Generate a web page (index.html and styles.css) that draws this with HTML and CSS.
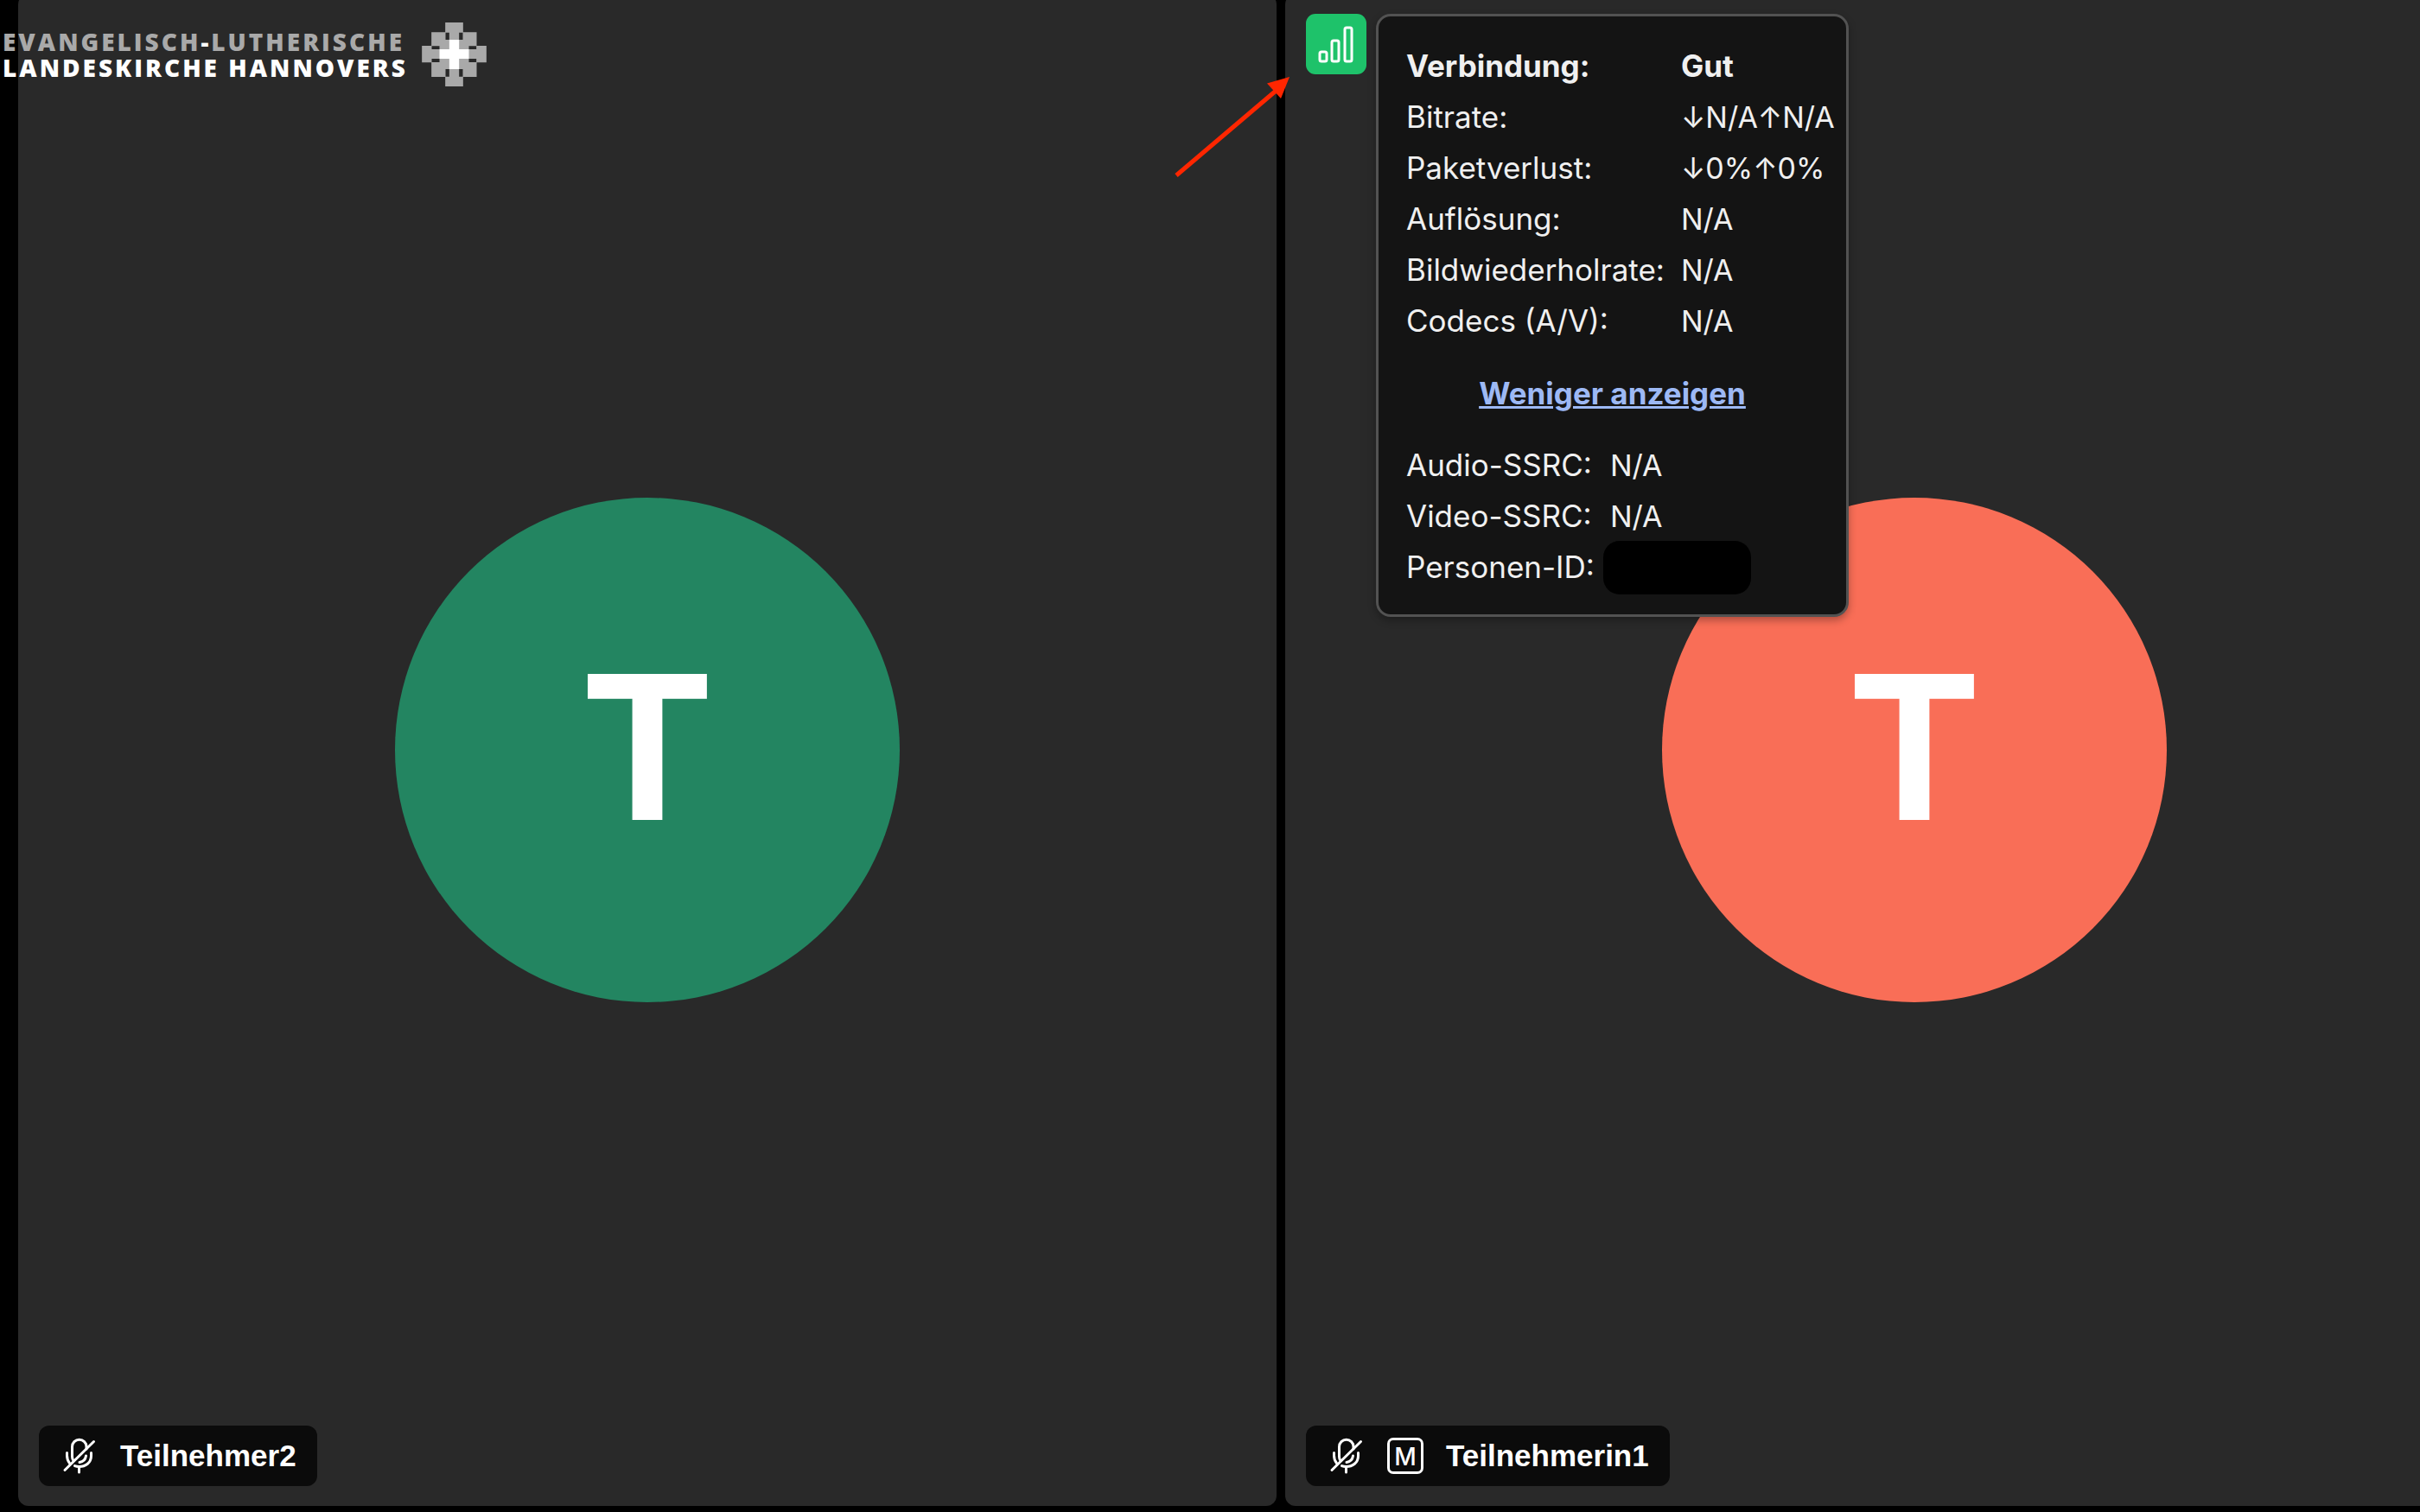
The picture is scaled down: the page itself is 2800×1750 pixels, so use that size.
FILE: index.html
```html
<!DOCTYPE html>
<html lang="de">
<head>
<meta charset="utf-8">
<title>Videokonferenz</title>
<link rel="stylesheet" href="styles.css">
</head>
<body>
<svg class="sprite" aria-hidden="true">
  <symbol id="mic-off" viewBox="0 0 42 42">
    <g fill="none" stroke="currentColor" stroke-width="3" stroke-linecap="round" stroke-linejoin="round">
      <path d="M14 26.500C12.800 25 12.500 23.500 12.500 22V10.500a8.250 8.250 0 0 1 16.500 0V13"/>
      <path d="M6.500 17.500v3c0 4 1 6.500 3 9"/>
      <path d="M34.500 17.500v3.500c0 8-6.500 12.500-14 12.500-2 0-3.500-.300-5-.900"/>
      <path d="M28.500 21c-.700 4.500-3.500 7-7.500 7.500"/>
      <path d="M20.500 34v6"/>
      <path d="M4 37.500L37.500 4.500"/>
    </g>
  </symbol>
</svg>

<main class="stage">
  <section class="tile">
    <div class="avatar avatar-green">T</div>
    <div class="chip">
      <svg class="icon" role="img" aria-label="Stumm"><use href="#mic-off"/></svg>
      <span>Teilnehmer2</span>
    </div>
  </section>

  <section class="tile">
    <div class="avatar avatar-coral">T</div>
    <div class="connection">
      <button class="signal" type="button" aria-label="Verbindung">
        <svg viewBox="0 0 70 70" width="70" height="70" fill="none" stroke="#fff" stroke-width="3">
          <rect x="16" y="44" width="8" height="11" rx="2"/>
          <rect x="30" y="31" width="8" height="24" rx="2"/>
          <rect x="45" y="16" width="8" height="39" rx="2"/>
        </svg>
      </button>
      <div class="stats">
        <table class="stats-table">
          <tr class="strong"><th scope="row">Verbindung:</th><td>Gut</td></tr>
          <tr><th scope="row">Bitrate:</th><td>↓N/A↑N/A</td></tr>
          <tr><th scope="row">Paketverlust:</th><td>↓0%↑0%</td></tr>
          <tr><th scope="row">Auflösung:</th><td>N/A</td></tr>
          <tr><th scope="row">Bildwiederholrate:</th><td>N/A</td></tr>
          <tr><th scope="row">Codecs (A/V):</th><td>N/A</td></tr>
        </table>
        <a class="toggle" href="#">Weniger anzeigen</a>
        <table class="stats-table ids">
          <tr><th scope="row">Audio-SSRC:</th><td>N/A</td></tr>
          <tr><th scope="row">Video-SSRC:</th><td>N/A</td></tr>
          <tr><th scope="row">Personen-ID:</th><td><span class="redacted"></span></td></tr>
        </table>
      </div>
    </div>
    <div class="chip">
      <svg class="icon" role="img" aria-label="Stumm"><use href="#mic-off"/></svg>
      <span class="moderator">M</span>
      <span>Teilnehmerin1</span>
    </div>
  </section>
</main>

<header class="brand">
  <div class="brand-name">
    <div class="brand-top">EVANGELISCH<b>-</b>LUTHERISCHE</div>
    <div>LANDESKIRCHE HANNOVERS</div>
  </div>
  <svg class="brand-mark" viewBox="34 48 224 222" aria-hidden="true">
    <path fill="#a9a9a9" fill-rule="evenodd" d="M115 48h62v34h47v47h34v58h-34v50h-47v33h-62v-33H67v-50H34v-58h33V82h48z M116 83v25h13V83z M163 83v25h13V83z M116 210v26h13v-26z M163 210v26h13v-26z M68 130v11h27v-11z M197 130v11h26v-11z M68 174v12h27v-12z M197 174v12h26v-12z"/>
    <path fill="#fff" d="M129 108h34v33h34v33h-34v36h-34v-36H95v-33h34z"/>
  </svg>
</header>

<svg class="pointer" viewBox="0 0 140 120" aria-hidden="true">
  <path d="M6 118L126 16" stroke="#ff2600" stroke-width="5"/>
  <path d="M137 4L111 11.500L127 29z" fill="#ff2600"/>
</svg>
</body>
</html>
```
FILE: styles.css
```css
* {
  box-sizing: border-box;
}

body {
  margin: 0;
  height: 100vh;
  overflow: hidden;
  background: #000;
  color: #fff;
  font-family: Inter, "Liberation Sans", sans-serif;
}

.sprite {
  position: absolute;
  width: 0;
  height: 0;
}

.stage {
  display: grid;
  grid-template-columns: 52vw 52vw;
  gap: 10px;
  height: 100vh;
  margin-top: -7px;
  padding-left: 21px;
  overflow: hidden;
}

.tile {
  position: relative;
  display: flex;
  align-items: center;
  justify-content: center;
  background: #292929;
  border-radius: 12px;
}

.avatar {
  display: flex;
  align-items: center;
  justify-content: center;
  width: 584px;
  height: 584px;
  padding-bottom: 6px;
  border-radius: 50%;
  font-size: 232px;
  font-weight: 700;
  line-height: 1;
}

.avatar-green {
  background: #238561;
}

.avatar-coral {
  background: #f96e57;
}

.chip {
  position: absolute;
  left: 24px;
  bottom: 23px;
  display: flex;
  align-items: center;
  gap: 26px;
  height: 70px;
  padding: 0 24px 0 26px;
  border-radius: 12px;
  background: #0b0b0b;
  font-family: "Liberation Sans", sans-serif;
  font-size: 35px;
  font-weight: 700;
}

.icon {
  width: 42px;
  height: 42px;
}

.moderator {
  display: flex;
  align-items: center;
  justify-content: center;
  width: 42px;
  height: 42px;
  padding-top: 2px;
  border: 3px solid #fff;
  border-radius: 7px;
  font-family: Inter, sans-serif;
  font-size: 28px;
  font-weight: 500;
}

.connection {
  position: absolute;
  top: 23px;
  left: 24px;
  display: flex;
  align-items: flex-start;
  gap: 11px;
}

.signal {
  width: 70px;
  height: 70px;
  padding: 0;
  border: 0;
  border-radius: 11px;
  background: #1ec26a;
}

.signal svg {
  display: block;
}

.stats {
  width: 547px;
  padding: 28px 0 25px 32px;
  border: 3px solid #525252;
  border-radius: 17px;
  background: #141414;
  box-shadow: 0 4px 10px rgba(0, 0, 0, 0.3);
  color: #f0f0f0;
  font-size: 34px;
  line-height: 59px;
}

.stats-table {
  border-collapse: collapse;
  white-space: nowrap;
}

.stats-table th,
.stats-table td {
  height: 59px;
  padding: 0;
  text-align: left;
  font-weight: 400;
}

.stats-table th {
  width: 318px;
  font-size: 35px;
}

.stats-table .strong th,
.stats-table .strong td {
  font-size: 35px;
  font-weight: 700;
}

.stats-table.ids th {
  width: 236px;
}

.toggle {
  display: block;
  margin: 25px 32px 24px 0;
  color: #9db9f5;
  font-size: 35px;
  font-weight: 700;
  text-align: center;
  text-decoration-thickness: 3px;
}

.redacted {
  display: block;
  width: 171px;
  height: 62px;
  margin: -2px 0 -2px -8px;
  border-radius: 19px;
  background: #000;
}

.brand {
  position: absolute;
  top: 26px;
  left: 3px;
  display: flex;
  align-items: center;
  gap: 16px;
  font-family: "Open Sans", sans-serif;
  font-size: 28px;
  font-weight: 800;
  line-height: 30px;
  letter-spacing: 3px;
  white-space: nowrap;
}

.brand-top {
  color: #a9a9a9;
}

.brand-top b {
  color: #fff;
}

.brand-mark {
  width: 75px;
  height: 74px;
}

.pointer {
  position: absolute;
  top: 85px;
  left: 1355px;
  width: 140px;
  height: 120px;
}
```
